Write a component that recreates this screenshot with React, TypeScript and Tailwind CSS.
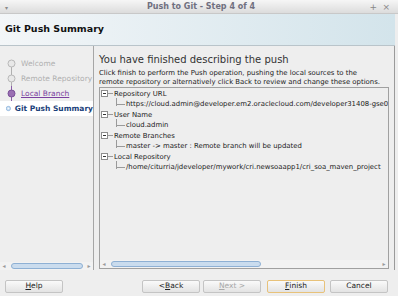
import React from "react";

const font = { fontFamily: '"DejaVu Sans", "Liberation Sans", sans-serif' };

function NavDot({ kind }: { kind: "done" | "link" | "current" }) {
  if (kind === "current") {
    return (
      <svg width="11" height="11" viewBox="0 0 11 11" aria-hidden>
        <circle cx="5.5" cy="5.5" r="5" fill="#bcd6f0" stroke="#5b8fc9" />
        <path d="M5.5 2.5v6M2.5 5.5h6M3.4 3.4l4.2 4.2M7.6 3.4l-4.2 4.2" stroke="#ffffff" strokeWidth="1" />
      </svg>
    );
  }
  const fill = kind === "link" ? "#9a6fb3" : "#e8e8e8";
  const stroke = kind === "link" ? "#7a4f98" : "#b8b8b8";
  return (
    <svg width="9" height="9" viewBox="0 0 9 9" aria-hidden>
      <circle cx="4.5" cy="4.5" r="3.5" fill={fill} stroke={stroke} />
    </svg>
  );
}

function ScrollBar({ thumb }: { thumb: string }) {
  return (
    <div className="flex h-[8px] items-center bg-[#f2f2f2]">
      <span className="w-[8px] text-center text-[6px] leading-none text-[#9a9a9a]">◂</span>
      <div className="relative h-full flex-1">
        <div className={`absolute top-[1px] bottom-[1px] left-0 rounded-full border border-[#8eb0d4] bg-[#cadcee] ${thumb}`} />
      </div>
      <span className="w-[8px] text-center text-[6px] leading-none text-[#9a9a9a]">▸</span>
    </div>
  );
}

function TreeNode({ label, child }: { label: string; child: string }) {
  return (
    <div>
      <div className="flex h-[10.5px] items-center">
        <span className="flex h-[7px] w-[7px] shrink-0 items-center justify-center border border-[#8c8c8c] bg-white">
          <span className="h-px w-[3px] bg-[#333]" />
        </span>
        <span className="h-px w-[5px] shrink-0 bg-[#9a9a9a]" />
        <span className="ml-[1px] whitespace-nowrap">{label}</span>
      </div>
      <div className="flex h-[10.5px] items-center pl-[15px]">
        <span className="mb-[5px] h-[8px] w-px shrink-0 bg-[#9a9a9a]" />
        <span className="h-px w-[8px] shrink-0 bg-[#9a9a9a]" />
        <span className="ml-[1px] shrink-0 whitespace-nowrap">{child}</span>
      </div>
    </div>
  );
}

function Btn({ children, disabled, focus }: { children: React.ReactNode; disabled?: boolean; focus?: boolean }) {
  return (
    <div
      className={`flex h-[13px] w-[58px] items-center justify-center rounded-[2px] border bg-gradient-to-b from-[#fafafa] to-[#e3e3e3] text-[7.5px] ${
        focus ? "border-[#e8c27a]" : "border-[#c4c4c4]"
      } ${disabled ? "text-[#a8a8a8]" : "text-[#222]"}`}
    >
      {children}
    </div>
  );
}

export default function App() {
  return (
    <div style={font} className="flex h-[296px] w-[398px] flex-col overflow-hidden bg-[#eeeeee] text-[#222]">
      <div className="relative flex h-[14px] items-center justify-center border-b border-[#c8c8c8] bg-gradient-to-b from-[#f6f6f6] to-[#dcdcdc]">
        <span className="absolute left-[5px] top-[3px] text-[6px] text-[#8a8a8a]">▾</span>
        <span className="pl-[4px] text-[8px] font-bold text-[#707080]">Push to Git - Step 4 of 4</span>
        <span className="absolute right-[21px] top-[1px] text-[9px] text-[#888]">+</span>
        <span className="absolute right-[8px] top-[1px] text-[9px] text-[#888]">×</span>
      </div>

      <div className="mr-[3px] flex h-[32px] items-center border-b border-[#b9c4ca] bg-gradient-to-r from-[#f3f6f8] to-[#d3e4eb] pl-[5px]">
        <span className="text-[9.5px] font-bold text-[#111]">Git Push Summary</span>
      </div>

      <div className="flex flex-1 pr-[3px]">
        <div className="flex w-[94px] flex-col border-r border-[#a6a6a6]">
          <div className="relative flex-1 pt-[10px] text-[7.5px]">
            <div className="absolute left-[11px] top-[18px] h-[40px] w-px bg-[#b0b0b0]" />
            <div className="absolute left-[11px] top-[40px] h-[16px] w-px bg-[#8a5ca8]" />
            <div className="relative flex h-[15px] items-center pl-[7px]">
              <NavDot kind="done" />
              <span className="ml-[5px] text-[#b0b0b0]">Welcome</span>
            </div>
            <div className="relative flex h-[15px] items-center pl-[7px]">
              <NavDot kind="done" />
              <span className="ml-[5px] whitespace-nowrap text-[#b0b0b0]">Remote Repository</span>
            </div>
            <div className="relative flex h-[15px] items-center pl-[7px]">
              <NavDot kind="link" />
              <span className="ml-[5px] text-[#7b3fa0] underline">Local Branch</span>
            </div>
            <div className="relative flex h-[15px] items-center bg-white pl-[6px]">
              <NavDot kind="current" />
              <span className="ml-[4px] whitespace-nowrap font-bold text-[#1a3f7a]">Git Push Summary</span>
            </div>
          </div>
          <ScrollBar thumb="left-[3px] w-[72px]" />
        </div>

        <div className="flex min-w-0 flex-1 flex-col border-r border-[#9a9a9a] pl-[5px] pr-[5px]">
          <div className="pt-[8px] text-[10px] leading-[12px] text-[#333]">You have finished describing the push</div>
          <div className="mt-[2.5px] whitespace-nowrap text-[6.9px] leading-[9px] text-[#222]">
            Click finish to perform the Push operation, pushing the local sources to the
            <br />
            remote repository or alternatively click Back to review and change these options.
          </div>
          <div className="mb-[1px] flex flex-1 flex-col overflow-hidden border border-[#a0a0a0]">
            <div className="flex-1 overflow-hidden pl-[1px] pt-[1px] text-[6.9px] text-[#222]">
              <TreeNode label="Repository URL" child="https://cloud.admin@developer.em2.oraclecloud.com/developer31408-gse00000000/s/developer31408" />
              <TreeNode label="User Name" child="cloud.admin" />
              <TreeNode label="Remote Branches" child="master -> master : Remote branch will be updated" />
              <TreeNode label="Local Repository" child="/home/citurria/jdeveloper/mywork/cri.newsoaapp1/cri_soa_maven_project" />
            </div>
            <ScrollBar thumb="left-[3px] w-[150px]" />
          </div>
        </div>
      </div>

      <div className="flex h-[26px] items-center pl-[5px] pr-[10px] pt-[6px]">
        <Btn>
          <span className="underline">H</span>elp
        </Btn>
        <div className="flex-1" />
        <div className="flex gap-[3px]">
          <Btn>
            &lt; <span className="underline">B</span>ack
          </Btn>
          <Btn disabled>
            <span className="underline">N</span>ext &gt;
          </Btn>
          <div className="ml-[3px] mr-[2px]">
            <Btn focus>
              <span className="underline">F</span>inish
            </Btn>
          </div>
          <Btn>Cancel</Btn>
        </div>
      </div>
    </div>
  );
}
